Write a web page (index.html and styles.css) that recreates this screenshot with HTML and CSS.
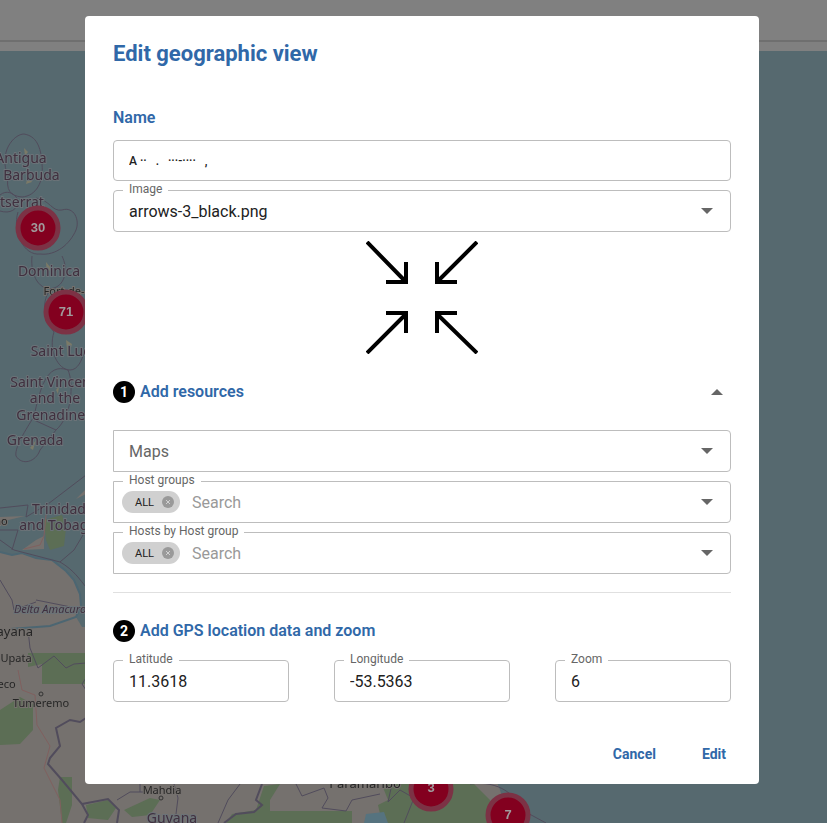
FILE: index.html
```html
<!DOCTYPE html>
<html lang="en">
<head>
    <meta charset="UTF-8">
    <meta name="viewport" content="width=device-width, initial-scale=1.0">
    <title>Edit geographic view</title>
    <link rel="stylesheet" href="styles.css">
</head>
<body>
    <!-- Map behind the dialog -->
    <svg class="map" viewBox="0 0 827 823" preserveAspectRatio="xMidYMin slice" aria-hidden="true">
        <rect class="bar" width="827" height="51"/>
        <rect class="bar-line" y="40" width="827" height="2"/>

        <!-- Mainland -->
        <path class="land" d="M0 552L12 555L22 553L36 558L52 560L66 571L74 580L80 594L81 606L76 617L82 627H90V740H480L500 790L510 823H0Z"/>
        <path class="shore" d="M0 552L12 555L22 553L36 558L52 560L66 571L74 580L80 594L81 606L76 617L50 626L10 629"/>
        <path class="land" d="M0 517L25 516L0 522ZM76 499L86 489V494Z"/>
        <path class="green" d="M0 710L20 697L33 704L33 730L20 744L0 745ZM28 653H86V684H42V664L28 667ZM60 777H72V805L66 823H62L58 790ZM86 805L108 800L116 808L108 820L88 818ZM124 810L150 798L160 800L150 815L132 817ZM264 786L280 784L270 800V811H352V823H226L232 814L256 810ZM380 780H470L490 800L498 823H382L378 805L388 800Z"/>
        <path class="green" d="M44 520L62 515L66 528L64 546L50 550L46 540Z"/>
        <path class="land" d="M22 550L36 540L44 536L44 549Z"/>
        <path class="lake" d="M366 814L384 812L388 823H364Z"/>
        <path class="sand" d="M24 148L28 152L25 156ZM28 176L32 182L26 184ZM46 262L51 268L47 275ZM66 340L72 344L68 358ZM56 390L59 386L58 394ZM30 448L36 440L33 450Z"/>

        <!-- Sea borders -->
        <path class="border" d="M8 176C-2 152 14 134 24 134C36 136 41 146 42 164C44 182 36 196 22 197C10 196 6 190 8 176ZM0 195C6 190 14 192 18 200C18 210 10 214 0 211M36 198C50 200 52 212 62 210C74 206 80 220 76 230C70 244 56 256 40 254C24 256 12 232 18 212M32 256C30 276 40 292 54 288C66 284 68 268 62 256M52 288C40 300 44 320 54 332M54 332C48 350 58 370 70 370C78 370 82 360 84 352M68 370C46 362 40 390 34 416C30 424 14 446 16 456C22 466 36 462 40 450L56 430C72 416 74 384 68 370M34 420L56 430M0 508L28 505L26 517L48 504L86 475M0 530H18L12 550M0 540L14 550L60 562L74 550L86 530M60 562C74 570 80 580 86 587"/>
        <path class="road" d="M46 515L44 536L40 545L24 549M18 670L22 690L35 695L37 725L50 746L44 768L60 800L62 823"/>
        <path class="border" d="M28 630L30 648L38 668L54 656L66 668L74 664L86 663M86 678L82 684L86 690"/>
        <path class="border bold" d="M86 718L80 722L70 720L56 728L60 746L50 758L48 764L62 780L82 804L88 815L84 823M82 804L108 799L119 810L117 823M262 784L256 800L262 805L254 812L236 814L224 823"/>
        <path class="border" d="M117 800L130 792H146M140 784V792M174 784L178 798L176 814M240 784L228 800L218 823M296 784L302 796L324 788L328 798L322 808L346 811L352 800L380 794M392 784L388 802L400 790L414 798L404 823M470 784C500 780 516 796 522 810L546 823M36 600L86 610M0 580L12 600L14 610L36 602"/>

        <!-- Place names -->
        <g class="place">
            <text x="21" y="163">Antigua</text>
            <text x="17" y="180">and Barbuda</text>
            <text x="7" y="207">Montserrat</text>
            <text x="49" y="276">Dominica</text>
            <text x="66" y="356">Saint Lucia</text>
            <text x="53" y="387">Saint Vincent</text>
            <text x="55" y="403">and the</text>
            <text x="54" y="420">Grenadines</text>
            <text x="35" y="445">Grenada</text>
            <text x="59" y="514">Trinidad</text>
            <text x="58" y="530">and Tobago</text>
            <text x="172" y="823">Guyana</text>
        </g>
        <g class="town">
            <text x="64" y="295">Fort-de-</text>
            <text x="64" y="308">France</text>
            <text x="1" y="525">no</text>
            <text x="6" y="636" class="large">Guayana</text>
            <text x="16" y="662">Upata</text>
            <text x="4" y="688">seco</text>
            <text x="41" y="707">Tumeremo</text>
            <text x="162" y="794">Mahdia</text>
            <text x="365" y="788" class="large">Paramaribo</text>
        </g>
        <text class="region" x="50" y="613">Delta Amacuro</text>
        <circle class="dot" cx="41" cy="694" r="2"/>
        <circle class="dot" cx="161" cy="798" r="2"/>

        <!-- Status markers -->
        <g class="marker">
            <circle cx="38" cy="228" r="20"/>
            <text x="38" y="232">30</text>
            <circle cx="66" cy="312" r="20"/>
            <text x="66" y="316">71</text>
            <circle cx="431" cy="789" r="20"/>
            <text x="431" y="792">3</text>
            <circle cx="508" cy="815" r="20"/>
            <text x="508" y="819">7</text>
        </g>
    </svg>

    <div class="overlay">
        <form class="dialog" role="dialog" aria-labelledby="dialogTitle">
            <h1 id="dialogTitle">Edit geographic view</h1>

            <label class="heading" for="name">Name</label>
            <div class="fields">
                <div class="field plain">
                    <input type="text" class="name" id="name" value="A ··   .   ···-····   ,">
                </div>
                <div class="field">
                    <label for="image">Image</label>
                    <select id="image">
                        <option selected>arrows-3_black.png</option>
                    </select>
                    <svg class="caret" viewBox="0 0 12 6"><path d="M0 0H12L6 6Z"/></svg>
                </div>
            </div>

            <svg class="preview" viewBox="0 0 112 113" role="img" aria-label="arrows-3_black.png">
                <path d="M1 1L40 41M20 41H40V21M111 1L71 41M71 21V41H91M1 112L40 73M20 72H40V92M111 112L71 73M91 72H71V92"/>
            </svg>

            <div class="section">
                <span class="step">1</span>
                <h2>Add resources</h2>
                <button type="button" class="toggle" aria-label="Collapse">
                    <svg class="caret" viewBox="0 0 12 6"><path d="M0 6H12L6 0Z"/></svg>
                </button>
            </div>
            <div class="fields resources">
                <div class="field">
                    <select class="empty" id="maps" aria-label="Maps">
                        <option selected>Maps</option>
                    </select>
                    <svg class="caret" viewBox="0 0 12 6"><path d="M0 0H12L6 6Z"/></svg>
                </div>
                <div class="field tags">
                    <label for="hostGroups">Host groups</label>
                    <span class="chip">ALL
                        <button type="button" aria-label="Remove ALL">
                            <svg viewBox="0 0 12 12"><circle cx="6" cy="6" r="6"/><path d="M4 4L8 8M8 4L4 8"/></svg>
                        </button>
                    </span>
                    <input type="text" id="hostGroups" placeholder="Search">
                    <svg class="caret" viewBox="0 0 12 6"><path d="M0 0H12L6 6Z"/></svg>
                </div>
                <div class="field tags">
                    <label for="hosts">Hosts by Host group</label>
                    <span class="chip">ALL
                        <button type="button" aria-label="Remove ALL">
                            <svg viewBox="0 0 12 12"><circle cx="6" cy="6" r="6"/><path d="M4 4L8 8M8 4L4 8"/></svg>
                        </button>
                    </span>
                    <input type="text" id="hosts" placeholder="Search">
                    <svg class="caret" viewBox="0 0 12 6"><path d="M0 0H12L6 6Z"/></svg>
                </div>
            </div>

            <hr>

            <div class="section">
                <span class="step">2</span>
                <h2>Add GPS location data and zoom</h2>
            </div>
            <div class="coords">
                <div class="field">
                    <label for="latitude">Latitude</label>
                    <input type="text" id="latitude" value="11.3618">
                </div>
                <div class="field">
                    <label for="longitude">Longitude</label>
                    <input type="text" id="longitude" value="-53.5363">
                </div>
                <div class="field">
                    <label for="zoom">Zoom</label>
                    <input type="text" id="zoom" value="6">
                </div>
            </div>

            <div class="actions">
                <button type="button">Cancel</button>
                <button type="submit">Edit</button>
            </div>
        </form>
    </div>
</body>
</html>
```
FILE: styles.css
```css
* {
    box-sizing: border-box;
}

body {
    margin: 0;
    min-height: 100vh;
    background-color: #56696f;
    font-family: Roboto, sans-serif;
    font-size: 16px;
    color: #212121;
}

/* Map */
.map {
    position: fixed;
    top: 0;
    left: 0;
    width: 100%;
    height: 100%;
}

.bar {
    fill: #808080;
}

.bar-line {
    fill: #6f6f6f;
}

.land {
    fill: #75716e;
}

.shore {
    fill: none;
    stroke: #4c6672;
    stroke-width: 2;
}

.green {
    fill: #5c6e55;
}

.lake {
    fill: #56737f;
}

.sand {
    fill: #7b7a68;
}

.border {
    fill: none;
    stroke: #514c5c;
    stroke-width: 1;
}

.border.bold {
    stroke-width: 2;
}

.road {
    fill: none;
    stroke: #80605f;
    stroke-width: 1;
}

.place,
.town,
.region {
    font-family: "Noto Sans", sans-serif;
    font-size: 14px;
    text-anchor: middle;
    fill: #40303f;
    paint-order: stroke;
    stroke: #6b7378;
    stroke-width: 2px;
}

.town {
    font-size: 11px;
    fill: #262626;
    stroke: #75716e;
}

.large {
    font-size: 13px;
}

.region {
    font-size: 11px;
    font-style: italic;
}

.dot {
    fill: none;
    stroke: #333;
}

.marker circle {
    fill: #83001f;
    stroke: #7c3245;
    stroke-width: 5px;
}

.marker text {
    font-family: "Liberation Sans", sans-serif;
    font-size: 13px;
    font-weight: bold;
    text-anchor: middle;
    fill: #a09a9c;
}

/* Dialog */
.overlay {
    position: relative;
    padding: 16px 68px 16px 85px;
}

.dialog {
    padding: 24px 28px 12px;
    background-color: #fff;
    border-radius: 4px;
}

h1 {
    margin: 0 0 40px;
    font-size: 22px;
    line-height: 28px;
    font-weight: bold;
    color: #3068a8;
}

h2,
.heading {
    margin: 0;
    font-size: 16px;
    line-height: 20px;
    font-weight: 600;
    color: #3068a8;
}

.heading {
    display: block;
    margin-bottom: 12px;
}

.fields {
    display: flex;
    flex-direction: column;
    gap: 9px;
}

.field {
    position: relative;
    display: flex;
    align-items: center;
    height: 42px;
    border: 1px solid #bdbdbd;
    border-radius: 4px;
}

.field.plain {
    height: 41px;
}

.field label {
    position: absolute;
    top: -10px;
    left: 9px;
    padding: 0 6px;
    background-color: #fff;
    font-size: 12px;
    line-height: 16px;
    color: #666;
}

.field input,
.field select {
    flex: 1;
    width: 100%;
    min-width: 0;
    height: 100%;
    padding: 0 15px;
    border: none;
    background: none;
    outline: none;
    appearance: none;
    font: inherit;
    color: inherit;
}

.field .name {
    font-size: 12px;
    font-weight: 500;
    white-space: pre;
}

.field .empty {
    color: #666;
}

.field input::placeholder {
    color: #999;
    opacity: 1;
}

.caret {
    width: 12px;
    height: 6px;
    fill: #666;
}

.field .caret {
    position: absolute;
    right: 17px;
    pointer-events: none;
}

.resources .field {
    border-radius: 0 4px 4px 0;
}

.field.tags {
    padding-left: 8px;
}

.field.tags input {
    padding-left: 12px;
}

.chip {
    display: flex;
    align-items: center;
    gap: 8px;
    height: 22px;
    padding: 0 6px 0 13px;
    border-radius: 11px;
    background-color: #d0d0d0;
    font-size: 11px;
}

.chip button {
    display: flex;
    padding: 0;
    border: none;
    background: none;
    cursor: pointer;
}

.chip svg {
    width: 12px;
    height: 12px;
    fill: #999;
    stroke: #d0d0d0;
}

.chip circle {
    stroke: none;
}

.preview {
    display: block;
    width: 112px;
    height: 113px;
    margin: 9px auto 27px;
    fill: none;
    stroke: #000;
    stroke-width: 4;
}

.section {
    display: flex;
    align-items: center;
    gap: 5px;
}

.step {
    width: 22px;
    height: 22px;
    border-radius: 50%;
    background-color: #000;
    color: #fff;
    font-size: 14px;
    line-height: 22px;
    font-weight: bold;
    text-align: center;
}

.toggle {
    display: flex;
    margin-left: auto;
    padding: 8px;
    border: none;
    background: none;
    cursor: pointer;
}

.resources {
    margin-top: 27px;
}

hr {
    margin: 18px 0 27px;
    border: none;
    border-top: 1px solid #e0e0e0;
}

.coords {
    display: grid;
    grid-template-columns: repeat(3, 1fr);
    gap: 45px;
    margin-top: 18px;
}

.actions {
    display: flex;
    justify-content: flex-end;
    gap: 36px;
    margin-top: 34px;
}

.actions button {
    height: 36px;
    padding: 0 5px;
    border: none;
    background: none;
    font: inherit;
    font-size: 14px;
    font-weight: bold;
    color: #3068a8;
    cursor: pointer;
}

/* Mobile responsiveness */
@media (max-width: 600px) {
    .overlay {
        padding: 16px;
    }

    .coords {
        grid-template-columns: 1fr;
        gap: 18px;
    }
}
```
